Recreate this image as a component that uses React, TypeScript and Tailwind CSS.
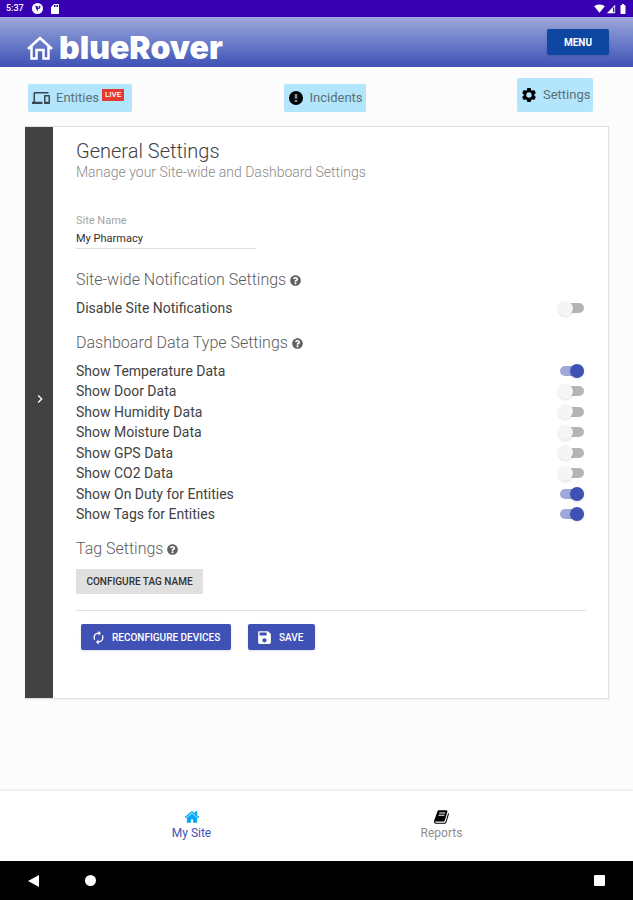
import { useState } from 'react';
import type { ReactNode } from 'react';
import {
    MdAutorenew,
    MdBatteryFull,
    MdChevronRight,
    MdDevices,
    MdNetworkCell,
    MdSave,
    MdSdCard,
    MdSignalWifi4Bar,
} from 'react-icons/md';
import { FaQuestionCircle } from 'react-icons/fa';

interface DataSetting {
    id: string;
    label: string;
    enabled: boolean;
}

const DATA_SETTINGS: DataSetting[] = [
    { id: 'temperature', label: 'Show Temperature Data', enabled: true },
    { id: 'door', label: 'Show Door Data', enabled: false },
    { id: 'humidity', label: 'Show Humidity Data', enabled: false },
    { id: 'moisture', label: 'Show Moisture Data', enabled: false },
    { id: 'gps', label: 'Show GPS Data', enabled: false },
    { id: 'co2', label: 'Show CO2 Data', enabled: false },
    { id: 'duty', label: 'Show On Duty for Entities', enabled: true },
    { id: 'tags', label: 'Show Tags for Entities', enabled: true },
];

const GEAR_TEETH = [0, 60, 120, 180, 240, 300];

function StatusBar() {
    return (
        <div className="flex h-[17px] items-center justify-between bg-[#3700b3] pr-1 pl-1.5 text-white">
            <div className="flex items-center">
                <span className="text-[9px] font-medium">5:37</span>
                <svg className="ml-2 size-[11px]" viewBox="0 0 22 22">
                    <circle cx="11" cy="11" r="11" fill="currentColor" />
                    <path d="M6 5l5 2 6-2-1 6-4 1-1 5-2-4z" fill="#3700b3" />
                    <circle cx="13" cy="8" r="1.5" fill="currentColor" />
                </svg>
                <MdSdCard className="ml-1.5 size-3" />
            </div>
            <div className="flex items-center gap-px">
                <MdSignalWifi4Bar className="size-[11px]" />
                <MdNetworkCell className="size-[10px]" />
                <MdBatteryFull className="size-3" />
            </div>
        </div>
    );
}

function Header() {
    return (
        <header className="flex h-[50px] items-center justify-between bg-linear-to-b from-[#9fa8da] to-[#3f51b5] pr-6 pl-[27px]">
            <a href="#home" className="flex items-center gap-1.5 pt-3 text-white">
                <svg className="size-[26px]" viewBox="0 0 26 26" fill="none" stroke="currentColor" strokeWidth="2.5">
                    <path d="M1 14L13 3l12 11" />
                    <path d="M4.5 12v11.500h5V15h7v8.500h5V12" />
                </svg>
                <span className="font-[Inter,sans-serif] text-[32px] leading-none font-black">blueRover</span>
            </a>
            <button className="h-[26px] w-[62px] rounded-xs bg-[#0d47a1] text-[10px] font-bold text-white shadow-sm">MENU</button>
        </header>
    );
}

function IncidentIcon() {
    return (
        <svg className="size-4" viewBox="0 0 24 24">
            <circle cx="12" cy="12" r="10.5" fill="#000000" />
            <path d="M10 6h4v7h-4zM10 15h4v3h-4z" fill="#78909c" />
        </svg>
    );
}

function GearIcon() {
    return (
        <svg className="size-4" viewBox="0 0 24 24">
            <circle cx="12" cy="12" r="6" fill="none" stroke="#000000" strokeWidth="4" />
            {GEAR_TEETH.map((angle) => (
                <path key={angle} d="M9.500 1.500h5l1 4h-7z" fill="#000000" transform={`rotate(${angle} 12 12)`} />
            ))}
        </svg>
    );
}

function NavTabs() {
    return (
        <nav className="flex items-end justify-between pt-[11px] pr-10 pb-[14px] pl-7 text-[13px] text-[#5b7078]">
            <a href="#entities" className="flex h-7 w-[104px] items-center rounded-xs bg-[#b3e5fc] pl-1">
                <MdDevices className="size-[18px] text-[#37474f]" />
                <span className="ml-1.5">Entities</span>
                <span className="mb-1.5 ml-[3px] bg-[#e53935] px-[3px] text-[8px] leading-[12px] font-medium text-white">LIVE</span>
            </a>
            <a href="#incidents" className="flex h-7 w-[82px] items-center rounded-xs bg-[#b3e5fc] pl-1">
                <IncidentIcon />
                <span className="ml-1.5">Incidents</span>
            </a>
            <a href="#settings" className="flex h-[34px] w-[76px] items-center rounded-xs bg-[#b3e5fc] pl-1">
                <GearIcon />
                <span className="ml-1.5">Settings</span>
            </a>
        </nav>
    );
}

function SectionTitle({ children }: { children: ReactNode }) {
    return (
        <h2 className="flex items-center gap-1 text-base leading-5 font-light text-[#5c5c5c]">
            {children}
            <FaQuestionCircle className="size-[11px] text-[#616161]" />
        </h2>
    );
}

interface ToggleProps {
    label: string;
    checked: boolean;
    onChange: (checked: boolean) => void;
}

function Toggle({ label, checked, onChange }: ToggleProps) {
    return (
        <label className="flex items-center justify-between text-sm leading-5 text-[#424242]">
            {label}
            <span className="relative mr-0.5 flex h-3.5 w-6 items-center">
                <input
                    type="checkbox"
                    checked={checked}
                    onChange={(e) => onChange(e.target.checked)}
                    className="peer h-2.5 w-6 appearance-none rounded-full bg-[#b5b5b5] checked:bg-[#9fa8da]"
                />
                <span className="pointer-events-none absolute -left-0.5 size-[15px] rounded-full bg-[#f5f5f5] shadow-sm peer-checked:left-2.5 peer-checked:size-3.5 peer-checked:bg-[#3f51b5]" />
            </span>
        </label>
    );
}

function SettingsForm() {
    const [siteName, setSiteName] = useState('My Pharmacy');
    const [notificationsOff, setNotificationsOff] = useState(false);
    const [settings, setSettings] = useState(DATA_SETTINGS);

    const updateSetting = (id: string, enabled: boolean) => {
        setSettings(settings.map((s) => (s.id === id ? { ...s, enabled } : s)));
    };

    return (
        <div className="flex-1 pt-3 pr-[22px] pb-12 pl-[23px]">
            <h1 className="text-xl leading-6 font-light text-[#424242]">General Settings</h1>
            <p className="text-sm leading-[18px] font-light text-[#8a8a8a]">Manage your Site-wide and Dashboard Settings</p>

            <div className="mt-8 w-[180px]">
                <label htmlFor="site-name" className="block text-[11px] leading-4 text-[#a5a5a5]">Site Name</label>
                <input
                    id="site-name"
                    value={siteName}
                    onChange={(e) => setSiteName(e.target.value)}
                    className="block h-5 w-full border-b border-[#e0e0e0] text-[11px] text-[#303030] outline-none"
                />
            </div>

            <div className="mt-[21px]">
                <SectionTitle>Site-wide Notification Settings</SectionTitle>
                <div className="mt-2">
                    <Toggle label="Disable Site Notifications" checked={notificationsOff} onChange={setNotificationsOff} />
                </div>
            </div>

            <div className="mt-[15px]">
                <SectionTitle>Dashboard Data Type Settings</SectionTitle>
                <div className="mt-2 flex min-h-[163px] flex-col justify-between">
                    {settings.map((s) => (
                        <Toggle key={s.id} label={s.label} checked={s.enabled} onChange={(v) => updateSetting(s.id, v)} />
                    ))}
                </div>
            </div>

            <div className="mt-[15px]">
                <SectionTitle>Tag Settings</SectionTitle>
                <button className="mt-2.5 h-[25px] w-[127px] bg-[#e0e0e0] text-[10px] font-medium text-[#303030]">CONFIGURE TAG NAME</button>
            </div>

            <hr className="mt-4 border-[#e0e0e0]" />

            <div className="mt-[13px] ml-[5px] flex gap-[17px] text-[10px] font-medium text-white">
                <button className="flex h-[26px] w-[150px] items-center rounded-xs bg-[#3f51b5] pl-2.5 shadow-sm">
                    <MdAutorenew className="mr-1.5 size-[15px]" />
                    RECONFIGURE DEVICES
                </button>
                <button className="flex h-[26px] w-[67px] items-center rounded-xs bg-[#3f51b5] pl-2 shadow-sm">
                    <MdSave className="mr-1.5 size-[17px]" />
                    SAVE
                </button>
            </div>
        </div>
    );
}

function BottomNav() {
    return (
        <nav className="flex h-[71px] justify-center border-t border-[#eeeeee] bg-white pt-[18px] text-xs shadow-[0_-1px_2px_rgba(0,0,0,0.05)]">
            <a href="#site" className="flex w-[250px] flex-col items-center text-[#3f51b5]">
                <svg className="size-4 text-[#03a9f4]" viewBox="0 0 1792 1792" fill="currentColor">
                    <path d="M1472 992v480q0 26-19 45t-45 19h-384v-384h-256v384h-384q-26 0-45-19t-19-45v-480q0-1 .5-3t.5-3l575-474 575 474q1 2 1 6zm223-69l-62 74q-8 9-21 11h-3q-13 0-21-7l-692-577-692 577q-12 8-24 7-13-2-21-11l-62-74q-8-10-7-23.500t11-21.500l719-599q32-26 76-26t76 26l244 204v-195q0-14 9-23t23-9h192q14 0 23 9t9 23v408l219 182q10 8 11 21.500t-7 23.500z" />
                </svg>
                My Site
            </a>
            <a href="#reports" className="flex w-[250px] flex-col items-center text-[#8e8e8e]">
                <svg className="size-4 text-black" viewBox="0 0 1792 1792" fill="currentColor">
                    <path d="M1639 478q40 57 18 129l-275 906q-19 64-76.500 107.500t-122.500 43.500h-923q-77 0-148.500-53.500t-99.500-131.500q-24-67-2-127 0-4 3-27t4-37q1-8-3-21.500t-3-19.500q2-11 8-21t16.500-23.500 16.500-23.500q23-38 45-91.500t30-91.500q3-10 .5-30t-.5-28q3-11 17-28t17-23q21-36 42-92t25-90q1-9-2.500-32t.5-28q4-13 22-30.500t22-22.500q19-26 42.500-84.500t27.500-96.500q1-8-3-25.500t-2-26.500q2-8 9-18t18-23 17-21q8-12 16.500-30.500t15-35 16-36 19.500-32 26.500-23.500 36-11.500 47.500 5.500l-1 3q38-9 51-9h761q74 0 114 56t18 130l-274 906q-36 119-71.500 153.500t-128.500 34.500h-869q-27 0-38 15-11 16-1 43 24 70 144 70h923q29 0 56-15.500t35-41.500l300-987q7-22 5-57 38 15 59 43zm-1064 2q-4 13 2 22.500t20 9.500h608q13 0 25.500-9.500t16.500-22.500l21-64q4-13-2-22.500t-20-9.500h-608q-13 0-25.500 9.500t-16.500 22.500zm-83 256q-4 13 2 22.500t20 9.500h608q13 0 25.500-9.500t16.500-22.500l21-64q4-13-2-22.500t-20-9.500h-608q-13 0-25.500 9.500t-16.500 22.500z" />
                </svg>
                Reports
            </a>
        </nav>
    );
}

function SystemNav() {
    return (
        <div className="flex h-[39px] items-center bg-black pr-7 pl-7 text-white">
            <button aria-label="Back">
                <svg className="h-3 w-[11px]" viewBox="0 0 11 12" fill="currentColor">
                    <path d="M0 6L11 0v12z" />
                </svg>
            </button>
            <button aria-label="Home" className="ml-[46px] size-[11px] rounded-full bg-white" />
            <button aria-label="Recent apps" className="ml-auto size-[11px] rounded-[1px] bg-white" />
        </div>
    );
}

export default function App() {
    return (
        <div className="flex min-h-screen flex-col bg-[#fcfcfc] font-[Roboto,sans-serif]">
            <StatusBar />
            <Header />
            <NavTabs />
            <main className="mr-6 ml-[25px] flex border border-l-0 border-[#e0e0e0] bg-white shadow-xs">
                <button aria-label="Open side menu" className="flex w-7 items-center justify-center bg-[#424242] pb-7 pl-0.5 text-white">
                    <MdChevronRight className="size-4" />
                </button>
                <SettingsForm />
            </main>
            <div className="flex-1" />
            <BottomNav />
            <SystemNav />
        </div>
    );
}
